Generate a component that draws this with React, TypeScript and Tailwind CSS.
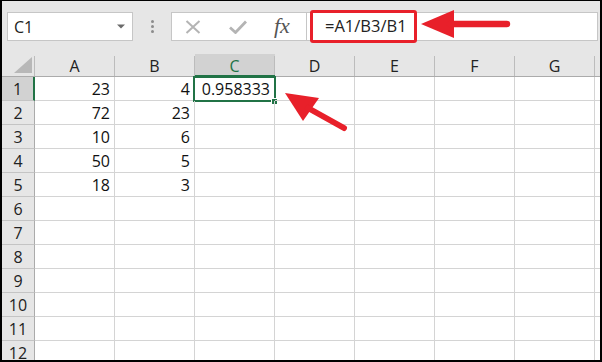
import React from 'react';

const COLS = ['A', 'B', 'C', 'D', 'E', 'F', 'G'];
const DATA: (string | number)[][] = [
  [23, 4, '0.958333'],
  [72, 23],
  [10, 6],
  [50, 5],
  [18, 3],
];

function HeaderCell({ label, selected }: { label: string; selected?: boolean }) {
  return (
    <div
      className={
        selected
          ? 'flex h-[23px] w-[80px] border-b-2 border-[#217346] bg-[#d2d2d2]'
          : 'flex h-[23px] w-[80px] border-b border-[#ababab]'
      }
    >
      <div
        className={
          selected
            ? 'flex flex-1 items-center justify-center pt-[3px] text-[16px] text-[#217346]'
            : 'flex flex-1 items-center justify-center pt-[2px] text-[16px] text-[#222]'
        }
      >
        {label}
      </div>
      <div className="mt-[2px] w-px bg-[#bcbcbc]" />
    </div>
  );
}

export default function App() {
  const rows = Array.from({ length: 12 }, (_, i) => DATA[i] ?? []);
  return (
    <div className="relative h-[362px] w-[602px] overflow-hidden border-t border-r-2 border-b-2 border-l-2 border-black bg-[#e6e6e6] font-['Open_Sans',sans-serif]">
      {/* toolbar */}
      <div className="flex h-[53px] items-start pt-[11px] pl-[5px]">
        <div className="flex h-[29px] w-[126px] items-center justify-between border border-[#c6c6c6] bg-white pr-[7px] pl-[6px]">
          <span className="text-[16px] text-[#222]">C1</span>
          <svg width="8" height="5" viewBox="0 0 8 5">
            <path d="M0 0.5h8L4 4.5z" fill="#6a6a6a" />
          </svg>
        </div>
        <div className="flex h-[29px] w-[38px] flex-col items-center justify-center gap-[2px]">
          <span className="h-[3px] w-[3px] rounded-full bg-[#8c8c8c]" />
          <span className="h-[3px] w-[3px] rounded-full bg-[#8c8c8c]" />
          <span className="h-[3px] w-[3px] rounded-full bg-[#8c8c8c]" />
        </div>
        <div className="flex h-[29px] w-[136px] items-center border border-[#c6c6c6] bg-white pl-[13px]">
          <svg width="16" height="14" viewBox="0 0 16 14">
            <path d="M1.5 1L14.5 13M14.5 1L1.5 13" stroke="#b4b4b4" strokeWidth="2" />
          </svg>
          <svg className="ml-[28px]" width="18" height="14" viewBox="0 0 18 14">
            <path d="M1 7.5L6.5 12.5L17 1.5" stroke="#b4b4b4" strokeWidth="2.8" fill="none" />
          </svg>
          <span className="ml-[27px] -mt-[2px] font-['Liberation_Serif',serif] text-[22px] leading-none text-[#555] italic">
            fx
          </span>
        </div>
        <div className="flex h-[29px] w-[291px] items-center border-y border-r border-[#c6c6c6] bg-white">
          <div className="ml-[3px] flex h-[33px] w-[107px] shrink-0 items-center rounded-[3px] border-[3px] border-[#e8202a] pl-[12px] text-[16.5px] text-[#222]">
            =A1/B3/B1
          </div>
        </div>
      </div>

      {/* column headers */}
      <div className="flex">
        <div className="flex h-[23px] w-[33px] border-b border-[#ababab]">
          <div className="flex flex-1 items-end justify-end pr-[2px] pb-[3px]">
            <svg width="18" height="16" viewBox="0 0 18 16">
              <polygon points="18,0 18,16 0,16" fill="#b8b8b8" />
            </svg>
          </div>
          <div className="mt-[2px] w-px bg-[#bcbcbc]" />
        </div>
        {COLS.map((c) => (
          <HeaderCell key={c} label={c} selected={c === 'C'} />
        ))}
        <div className="h-[23px] flex-1 border-b border-[#ababab]" />
      </div>

      {/* rows */}
      {rows.map((r, i) => (
        <div key={i} className="flex h-[24px] bg-white">
          <div
            className={
              i === 0
                ? 'flex w-[33px] items-center justify-center border-r-2 border-b border-r-[#217346] border-b-[#c4c4c4] bg-[#d2d2d2] pt-[1px] text-[16px] text-[#222]'
                : 'flex w-[33px] items-center justify-center border-r border-b border-r-[#ababab] border-b-[#c4c4c4] bg-[#e6e6e6] pt-[1px] text-[16px] text-[#222]'
            }
          >
            {i + 1}
          </div>
          {COLS.map((c, j) => (
            <div
              key={c}
              className="relative flex w-[80px] items-center justify-end border-r border-b border-[#d4d4d4] pt-[1px] pr-[4px] text-[16px] text-[#111]"
            >
              {r[j] ?? ''}
              {i === 0 && j === 2 && (
                <>
                  <div className="absolute -top-px -left-[2px] h-[26px] w-[83px] border-2 border-[#217346]" />
                  <div className="absolute top-[21px] left-[76px] h-[7px] w-[7px] border border-white bg-[#217346]" />
                </>
              )}
            </div>
          ))}
          <div className="flex-1 border-b border-[#d4d4d4]" />
        </div>
      ))}

      {/* annotation arrows */}
      <svg
        className="pointer-events-none absolute -top-px -left-[2px]"
        width="602"
        height="362"
        viewBox="0 0 602 362"
      >
        <polygon points="421,24 454,10 454,38" fill="#e8202a" />
        <line x1="450" y1="24" x2="507" y2="24" stroke="#e8202a" strokeWidth="6.5" strokeLinecap="round" />
        <polygon points="285,93 319,98 303,121" fill="#e8202a" />
        <line x1="308" y1="108" x2="344" y2="128" stroke="#e8202a" strokeWidth="6" strokeLinecap="round" />
      </svg>
    </div>
  );
}
